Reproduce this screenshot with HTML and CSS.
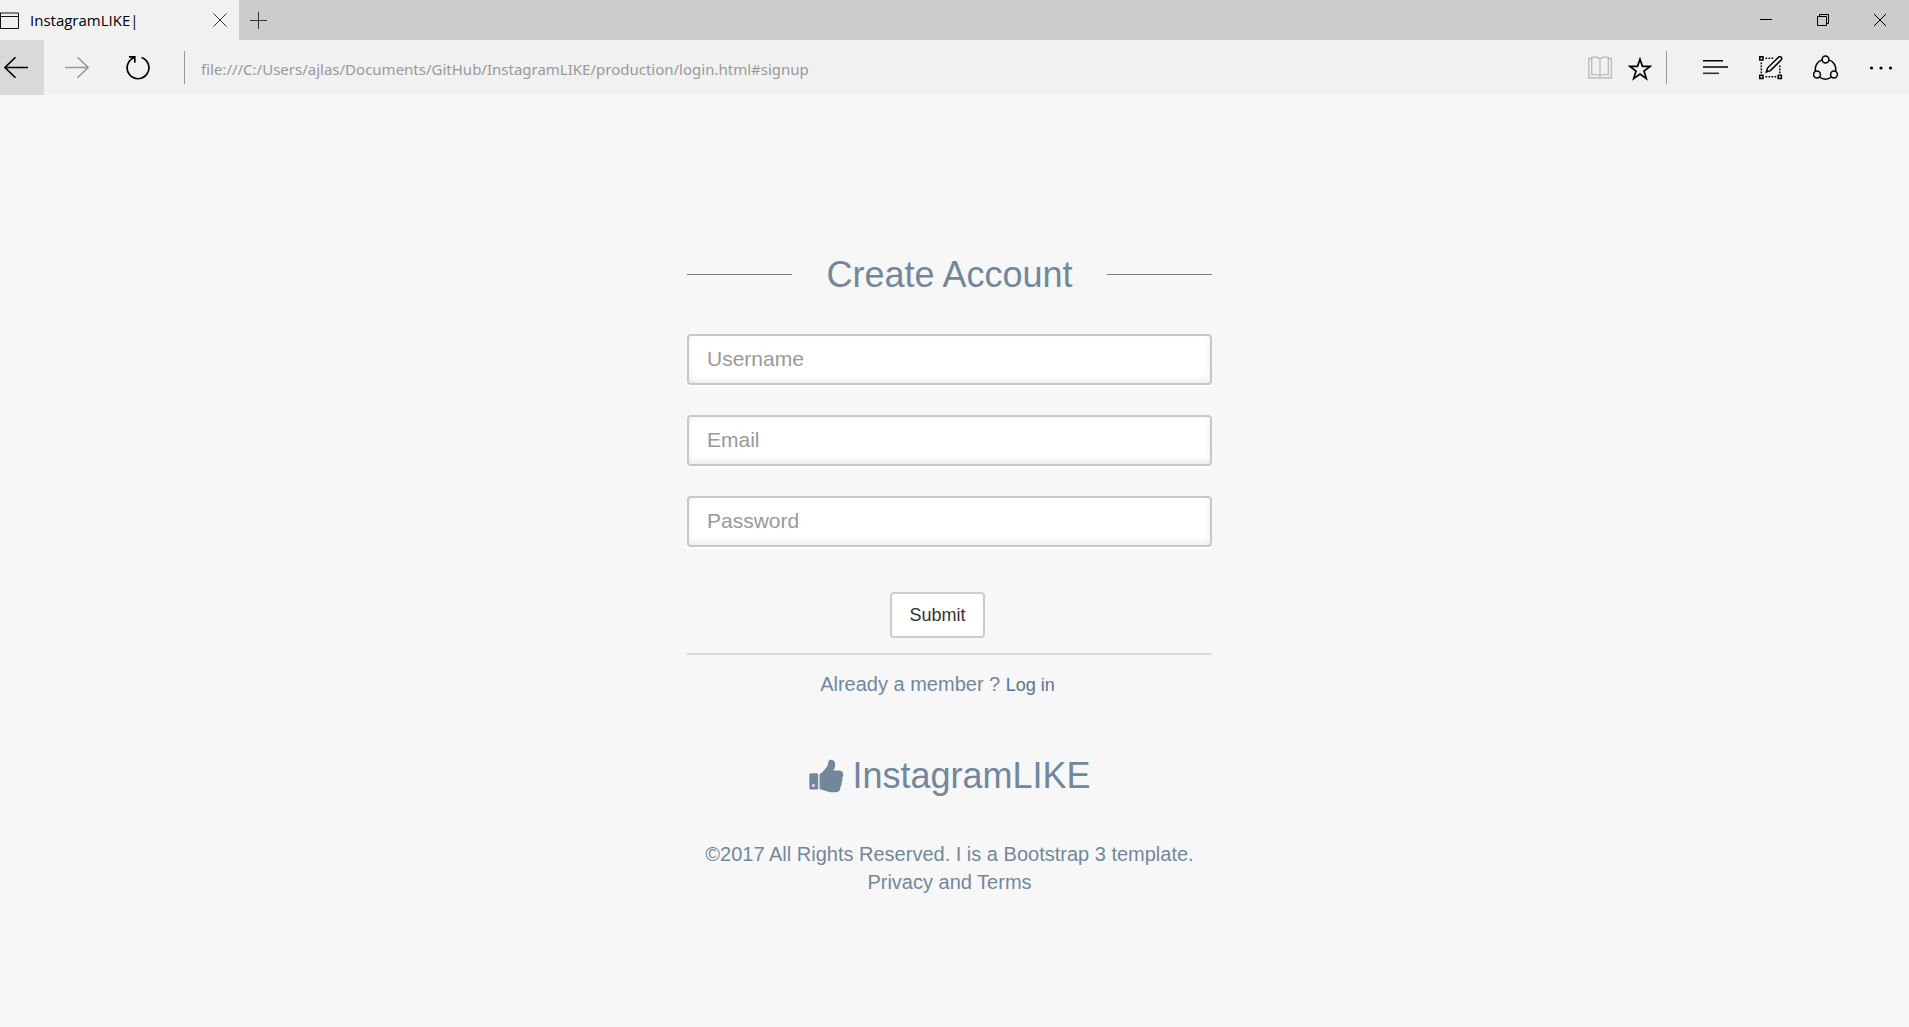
FILE: index.html
```html
<!DOCTYPE html>
<html lang="en">
<head>
<meta charset="utf-8">
<meta name="viewport" content="width=device-width, initial-scale=1">
<title>InstagramLIKE</title>
<link rel="stylesheet" href="styles.css">
</head>
<body>
<header class="browser">
  <div class="tabbar">
    <div class="tab">
      <svg class="tab-icon" width="19" height="17" viewBox="0 0 19 17" fill="none" stroke="#111" aria-hidden="true"><path d="M0 1h18.500v15.500H0M.5 1v15.500M0 4.500h18"/></svg>
      <span class="tab-title">InstagramLIKE|</span>
      <button class="icon-btn tab-close" aria-label="Close tab"><svg width="14" height="14" viewBox="0 0 14 14" stroke="#333"><path d="M.5.5l13 13M13.500.5l-13 13"/></svg></button>
    </div>
    <button class="icon-btn new-tab" aria-label="New tab"><svg width="17" height="17" viewBox="0 0 17 17" stroke="#333"><path d="M8.500 0v17M0 8.500h17"/></svg></button>
    <div class="window-controls">
      <button class="icon-btn" aria-label="Minimize"><svg width="12" height="12" viewBox="0 0 12 12" stroke="#000"><path d="M0 5.500h12"/></svg></button>
      <button class="icon-btn" aria-label="Restore"><svg width="12" height="12" viewBox="0 0 12 12" fill="none" stroke="#000"><path d="M.5 2.500h9v9h-9zM2.500 2.500v-2h9v9h-2"/></svg></button>
      <button class="icon-btn" aria-label="Close"><svg width="12" height="12" viewBox="0 0 12 12" stroke="#000"><path d="M0 0l12 12M12 0L0 12"/></svg></button>
    </div>
  </div>
  <nav class="toolbar" aria-label="Browser">
    <button class="icon-btn back" aria-label="Back"><svg width="24" height="22" viewBox="0 0 24 22" fill="none" stroke="#000" stroke-width="1.600"><path d="M24 10.500H1M11.500.3L1 10.500l10.500 10.200"/></svg></button>
    <button class="icon-btn forward" aria-label="Forward"><svg width="24" height="22" viewBox="0 0 24 22" fill="none" stroke="#999" stroke-width="1.600"><path d="M0 10.500h23M12.500.3L23 10.500 12.500 20.700"/></svg></button>
    <button class="icon-btn reload" aria-label="Refresh"><svg width="24" height="24" viewBox="0 0 24 24" fill="none" stroke="#000" stroke-width="1.700"><path d="M15.500 1.500A10.900 10.900 0 1 1 8 1.700M3 .9h5.800v5.800"/></svg></button>
    <input class="address" type="text" aria-label="Address" value="file:///C:/Users/ajlas/Documents/GitHub/InstagramLIKE/production/login.html#signup">
    <button class="icon-btn page-btn" aria-label="Reading view"><svg width="24" height="23" viewBox="0 0 24 23" fill="none" stroke="#bbb" stroke-width="1.300"><path d="M3.500 2.500H.8v19.500h22.500V2.500h-2.800M12 3.500v16.500M12 3C9.500.7 6.500.7 3.700 1.300v17.500c3-.6 6-.6 8.300 1.200 2.300-1.800 5.300-1.800 8.300-1.200V1.300C17.500.7 14.500.7 12 3z"/></svg></button>
    <button class="icon-btn page-btn" aria-label="Add to favorites"><svg class="star" width="24" height="24" viewBox="0 0 24 24" fill="none" stroke="#000" stroke-width="1.700"><path d="M12 2.200l2.500 7.200h7.600l-6.100 4.600 2.300 7.600L12 17l-6.300 4.600L8 14 1.900 9.400h7.600z"/></svg></button>
    <div class="hub">
      <button class="icon-btn" aria-label="Hub"><svg width="25" height="24" viewBox="0 0 25 24" stroke="#000" stroke-width="1.600"><path d="M0 4.800h20M0 11h25"/><path d="M0 17.300h16" stroke="#333"/></svg></button>
      <button class="icon-btn" aria-label="Make a Web Note"><svg width="24" height="24" viewBox="0 0 24 24" fill="none" stroke="#000" stroke-width="1.500"><path d="M.8.800h3.200v3.200H.8zM.8 19.200h3.200v3.200H.8zM19.200 19.200h3.200v3.200h-3.200z"/><path stroke-dasharray="1.700 1.300" d="M6.500 2.300h8M2.300 6.500v11.500M6.500 20.800h11.500M20.800 9.500v8.500"/><path d="M7.300 16l1.400-4.200L19.500 1.200a1.900 1.900 0 0 1 2.700 2.700L11.400 14.600z"/></svg></button>
      <button class="icon-btn" aria-label="Share"><svg width="26" height="26" viewBox="0 0 26 26" fill="none" stroke="#000" stroke-width="1.500"><circle cx="12.500" cy="4.500" r="3.400"/><circle cx="4" cy="19.500" r="3.400"/><circle cx="21" cy="19.500" r="3.400"/><path d="M9.200 4.900C4 6.300 1.500 11.500 2.500 16.400M15.800 4.900c5.200 1.400 7.700 6.600 6.700 11.500M6.500 22c3.800 2.900 8.200 2.900 12 0"/></svg></button>
      <button class="icon-btn" aria-label="More"><svg width="24" height="4" viewBox="0 0 24 4"><circle cx="2.500" cy="2" r="1.600"/><circle cx="12" cy="2" r="1.600"/><circle cx="21.500" cy="2" r="1.600"/></svg></button>
    </div>
  </nav>
</header>
<main class="page">
  <section class="signup">
    <form class="signup-form">
      <h1 class="heading ruled">Create Account</h1>
      <div class="fields">
        <input class="field" type="text" placeholder="Username" aria-label="Username">
        <input class="field" type="email" placeholder="Email" aria-label="Email">
        <input class="field" type="password" placeholder="Password" aria-label="Password">
      </div>
      <div class="actions"><button class="submit" type="submit">Submit</button></div>
    </form>
    <p class="member">Already a member ? <a class="login-link" href="#signin">Log in</a></p>
    <h1 class="heading brand">
      <svg width="38" height="38" viewBox="0 0 1792 1792" fill="currentColor" aria-hidden="true"><path d="M320 1344q0-26-19-45t-45-19q-27 0-45.500 19t-18.500 45q0 27 18.500 45.500t45.500 18.500q26 0 45-18.500t19-45.500zm160-512v640q0 26-19 45t-45 19h-288q-26 0-45-19t-19-45v-640q0-26 19-45t45-19h288q26 0 45 19t19 45zm1184 0q0 86-55 149 15 44 15 76 3 76-43 137 17 56 0 117-15 57-54 94 9 112-49 181-64 76-197 78h-129q-66 0-144-15.500t-121.500-29-120.500-39.500q-123-43-158-44-26-1-45-19.500t-19-44.500v-641q0-25 18-43.500t43-20.500q24-2 76-59t101-121q68-87 101-120 18-18 31-48t17.500-48.500 13.500-60.500q7-39 12.500-61t19.500-52 34-50q19-19 45-19 46 0 82.500 10.500t60 26 40 40.500 24 45 12 50 5 45 .5 39q0 38-9.500 76t-19 60-27.500 56q-3 6-10 18t-11 22-8 24h277q78 0 135 57t57 135z"/></svg>
      <span>InstagramLIKE</span>
    </h1>
    <p class="legal">©2017 All Rights Reserved. I is a Bootstrap 3 template. Privacy and Terms</p>
  </section>
</main>
</body>
</html>
```
FILE: styles.css
```css
* { box-sizing: border-box; }

body {
  margin: 0;
  background: #f7f7f7;
  color: #73879c;
  font-family: "Liberation Sans", Arial, sans-serif;
  font-size: 20px;
  line-height: 28px;
}

/* Browser bar */
.browser { font-family: "Open Sans", "Segoe UI", sans-serif; }
.tabbar { display: flex; height: 40px; background: #ccc; }
.tab {
  display: flex;
  align-items: center;
  width: 239px;
  background: #f1f1f1;
}
.tab-icon { margin-right: 11px; }
.tab-title { flex: 1; color: #000; font-size: 15px; }
.icon-btn {
  display: flex;
  align-items: center;
  justify-content: center;
  padding: 0;
  border: 0;
  background: none;
}
.tab-close { width: 38px; height: 40px; }
.new-tab { width: 39px; }
.window-controls { display: flex; margin-left: auto; padding-right: 1px; }
.window-controls .icon-btn { width: 57px; }
.toolbar {
  display: flex;
  align-items: center;
  height: 55px;
  background: #f1f1f1;
}
.back { width: 44px; height: 55px; padding-right: 12px; background: #d9d9d9; }
.forward { width: 66px; height: 55px; }
.reload { width: 55px; height: 55px; }
.address {
  flex: 1;
  min-width: 0;
  height: 33px;
  margin-left: 19px;
  padding: 2px 0 0 16px;
  border: 0;
  border-left: 1px solid #999;
  background: none;
  color: #999;
  font: 15px "Noto Sans", "Segoe UI", sans-serif;
}
.page-btn { width: 40px; height: 55px; }
.star { margin-top: 2px; }
.hub {
  display: flex;
  height: 33px;
  margin-left: 6px;
  padding: 0 1px 0 21px;
  border-left: 1px solid #999;
}
.hub .icon-btn { width: 55px; }

/* Sign-up form */
.page { padding: 157px 10px 0 0; }
.signup {
  max-width: 525px;
  margin: 0 auto;
  text-align: center;
}
.heading {
  display: flex;
  align-items: center;
  justify-content: center;
  margin: 0;
  font-size: 36px;
  font-weight: 400;
  line-height: 45px;
}
.ruled { justify-content: space-between; }
.ruled::before,
.ruled::after {
  width: 20%;
  height: 1px;
  background: #7e7e7e;
  content: "";
}
.fields { display: grid; gap: 30px; margin-top: 37px; }
.field {
  width: 100%;
  height: 51px;
  padding: 0 18px 2px;
  border: 2px solid #c8c8c8;
  border-radius: 4px;
  background: #fff;
  box-shadow: 0 2px 0 #fff, inset 0 -3px 6px rgba(0, 0, 0, 0.08);
  color: #777;
  font: 21px "Liberation Sans", Arial, sans-serif;
}
.field::placeholder { color: #999; opacity: 1; }
.actions {
  display: flex;
  justify-content: center;
  padding: 45px 24px 15px 0;
  border-bottom: 2px solid #d8d8d8;
}
.submit {
  height: 46px;
  padding: 0 17px;
  border: 2px solid #ccc;
  border-radius: 4px;
  background: #fff;
  color: #333;
  font: 18px "Liberation Sans", Arial, sans-serif;
}
.member { margin: 15px 24px 0 0; }
.login-link { color: #5a738e; font-size: 18px; text-decoration: none; }
.brand { gap: 6px; margin-top: 54px; }
.legal { margin: 42px 0 0; padding: 0 15px; }
```
